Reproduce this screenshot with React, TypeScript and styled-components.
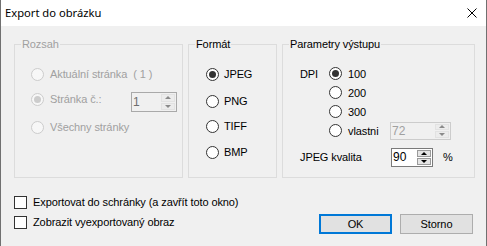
import React from 'react';
import styled, { createGlobalStyle } from 'styled-components';

const Global = createGlobalStyle`
  html, body { margin: 0; padding: 0; background: #f0f0f0; }
  body { width: 487px; height: 246px; overflow: hidden; }
`;

const Window = styled.div`
  box-sizing: border-box;
  width: 487px;
  height: 246px;
  display: flex;
  flex-direction: column;
  background: #f0f0f0;
  border-left: 1px solid #707070;
  border-right: 1px solid #707070;
  font-family: "Liberation Sans", Arial, sans-serif;
  font-size: 11px;
  letter-spacing: -0.1px;
  color: #000;
`;

const TitleBar = styled.div`
  flex: none;
  height: 26px;
  background: #fff;
  display: flex;
  align-items: center;
  justify-content: space-between;
  padding-left: 4px;
`;

const Title = styled.span`
  font-family: "Noto Sans", "Open Sans", sans-serif;
  font-size: 11.2px;
  letter-spacing: 0;
  line-height: 16px;
`;

const CloseButton = styled.div`
  width: 28px;
  height: 26px;
  display: flex;
  align-items: center;
  justify-content: center;
`;

const Body = styled.div`
  flex: 1;
  display: flex;
  flex-direction: column;
  padding: 18px 11px 0 13px;
`;

const Groups = styled.div`
  display: flex;
  gap: 5px;
`;

const Group = styled.div<{ $w: number; $pl: number; $pt: number }>`
  position: relative;
  box-sizing: border-box;
  width: ${p => p.$w}px;
  height: 134px;
  border: 1px solid #dcdcdc;
  padding: ${p => p.$pt}px 0 0 ${p => p.$pl}px;
  display: flex;
  flex-direction: column;
`;

const GroupTitle = styled.span<{ $disabled?: boolean }>`
  position: absolute;
  top: -7px;
  left: 6px;
  padding: 0 1px;
  line-height: 13px;
  background: #f0f0f0;
  color: ${p => (p.$disabled ? '#a0a0a0' : '#000')};
`;

const Row = styled.div<{ $h?: number; $mt?: number }>`
  display: flex;
  align-items: center;
  height: ${p => p.$h ?? 20}px;
  margin-top: ${p => p.$mt ?? 0}px;
`;

const RadioCircle = styled.span<{ $checked?: boolean; $disabled?: boolean }>`
  box-sizing: border-box;
  flex: none;
  width: 13px;
  height: 13px;
  border-radius: 50%;
  border: 1px solid ${p => (p.$disabled ? '#cccccc' : '#333333')};
  background: ${p => (p.$disabled ? '#f7f7f7' : '#ffffff')};
  display: flex;
  align-items: center;
  justify-content: center;
  &::after {
    content: '';
    width: 7px;
    height: 7px;
    border-radius: 50%;
    background: ${p => (p.$checked ? (p.$disabled ? '#cccccc' : '#333333') : 'transparent')};
  }
`;

const Label = styled.span<{ $disabled?: boolean; $w?: number; $ml?: number }>`
  margin-left: ${p => p.$ml ?? 6}px;
  white-space: pre;
  color: ${p => (p.$disabled ? '#a0a0a0' : '#000')};
  ${p => (p.$w ? `width: ${p.$w}px; flex: none;` : '')}
`;

const DpiBlock = styled.div`
  display: flex;
`;

const DpiLabel = styled.div`
  width: 29px;
  height: 19px;
  display: flex;
  align-items: center;
`;

const RadioColumn = styled.div`
  display: flex;
  flex-direction: column;
`;

const Spinner = styled.div<{ $w: number; $h: number; $border: string; $bg: string; $mt?: number }>`
  box-sizing: border-box;
  flex: none;
  width: ${p => p.$w}px;
  height: ${p => p.$h}px;
  border: 1px solid ${p => p.$border};
  background: ${p => p.$bg};
  display: flex;
  ${p => (p.$mt !== undefined ? `align-self: flex-start; margin-top: ${p.$mt}px;` : '')}
`;

const SpinValue = styled.span<{ $color: string }>`
  flex: 1;
  display: flex;
  align-items: center;
  padding-left: 1px;
  font-size: 12px;
  letter-spacing: 0;
  color: ${p => p.$color};
`;

const SpinButtons = styled.div`
  flex: none;
  width: 14px;
  display: flex;
  flex-direction: column;
  gap: 1px;
  padding: 1px;
`;

const SpinBtn = styled.div<{ $enabled?: boolean }>`
  box-sizing: border-box;
  flex: 1;
  background: ${p => (p.$enabled ? '#e5e5e5' : '#ececec')};
  border: 1px solid ${p => (p.$enabled ? '#9a9a9a' : '#e2e2e2')};
  display: flex;
  align-items: center;
  justify-content: center;
`;

const Arrow = styled.span<{ $down?: boolean; $color: string }>`
  width: 0;
  height: 0;
  border-left: 3px solid transparent;
  border-right: 3px solid transparent;
  ${p =>
    p.$down
      ? `border-top: 3px solid ${p.$color};`
      : `border-bottom: 3px solid ${p.$color};`}
`;

const Footer = styled.div`
  display: flex;
  justify-content: space-between;
  align-items: flex-start;
  margin-top: 14px;
`;

const Checks = styled.div`
  display: flex;
  flex-direction: column;
`;

const CheckBox = styled.span`
  box-sizing: border-box;
  flex: none;
  width: 13px;
  height: 13px;
  border: 1px solid #333333;
  background: #fff;
`;

const Buttons = styled.div`
  display: flex;
  gap: 8px;
  margin-top: 22px;
  margin-right: 2px;
`;

const Button = styled.div<{ $default?: boolean }>`
  box-sizing: border-box;
  width: 73px;
  height: 20px;
  display: flex;
  align-items: center;
  justify-content: center;
  background: #e1e1e1;
  border: ${p => (p.$default ? '2px solid #0078d7' : '1px solid #adadad')};
`;

type SpinProps = {
  value: string;
  w: number;
  h: number;
  enabled?: boolean;
  border: string;
  color: string;
  mt?: number;
};

const Spin: React.FC<SpinProps> = ({ value, w, h, enabled, border, color, mt }) => (
  <Spinner $w={w} $h={h} $border={border} $bg={enabled ? '#ffffff' : '#f0f0f0'} $mt={mt}>
    <SpinValue $color={color}>{value}</SpinValue>
    <SpinButtons>
      <SpinBtn $enabled={enabled}>
        <Arrow $color={enabled ? '#000' : '#8a8a8a'} />
      </SpinBtn>
      <SpinBtn $enabled={enabled}>
        <Arrow $down $color={enabled ? '#000' : '#8a8a8a'} />
      </SpinBtn>
    </SpinButtons>
  </Spinner>
);

export default function App() {
  return (
    <>
      <Global />
      <Window>
        <TitleBar>
          <Title>Export do obrázku</Title>
          <CloseButton>
            <svg width="10" height="10" viewBox="0 0 10 10">
              <path d="M0.5 0.5 L9.5 9.5 M9.5 0.5 L0.5 9.5" stroke="#000" strokeWidth="1" fill="none" />
            </svg>
          </CloseButton>
        </TitleBar>
        <Body>
          <Groups>
            <Group $w={169} $pl={16} $pt={19}>
              <GroupTitle $disabled>Rozsah</GroupTitle>
              <Row>
                <RadioCircle $disabled />
                <Label $disabled>{'Aktuální stránka  ( 1 )'}</Label>
              </Row>
              <Row $mt={5}>
                <RadioCircle $disabled $checked />
                <Label $disabled $w={81}>Stránka č.:</Label>
                <Spin value="1" w={46} h={20} border="#a9a9a9" color="#6d6d6d" mt={3} />
              </Row>
              <Row $mt={8}>
                <RadioCircle $disabled />
                <Label $disabled>Všechny stránky</Label>
              </Row>
            </Group>

            <Group $w={89} $pl={17} $pt={19}>
              <GroupTitle>Formát</GroupTitle>
              <Row>
                <RadioCircle $checked />
                <Label $ml={5}>JPEG</Label>
              </Row>
              <Row $mt={7}>
                <RadioCircle />
                <Label $ml={5}>PNG</Label>
              </Row>
              <Row $mt={5}>
                <RadioCircle />
                <Label $ml={5}>TIFF</Label>
              </Row>
              <Row $mt={6}>
                <RadioCircle />
                <Label $ml={5}>BMP</Label>
              </Row>
            </Group>

            <Group $w={193} $pl={17} $pt={19}>
              <GroupTitle>Parametry výstupu</GroupTitle>
              <DpiBlock>
                <DpiLabel>DPI</DpiLabel>
                <RadioColumn>
                  <Row $h={19}>
                    <RadioCircle $checked />
                    <Label>100</Label>
                  </Row>
                  <Row $h={19}>
                    <RadioCircle />
                    <Label>200</Label>
                  </Row>
                  <Row $h={19}>
                    <RadioCircle />
                    <Label>300</Label>
                  </Row>
                  <Row $h={19}>
                    <RadioCircle />
                    <Label $w={42}>vlastni</Label>
                    <Spin value="72" w={61} h={18} border="#cccccc" color="#a0a0a0" />
                  </Row>
                </RadioColumn>
              </DpiBlock>
              <Row $h={18} $mt={8}>
                <Label $ml={0} $w={91}>JPEG kvalita</Label>
                <Spin value="90" w={42} h={19} border="#7a7a7a" color="#000" enabled />
                <Label $ml={10}>%</Label>
              </Row>
            </Group>
          </Groups>

          <Footer>
            <Checks>
              <Row>
                <CheckBox />
                <Label>Exportovat do schránky (a zavřít toto okno)</Label>
              </Row>
              <Row>
                <CheckBox />
                <Label>Zobrazit vyexportovaný obraz</Label>
              </Row>
            </Checks>
            <Buttons>
              <Button $default>OK</Button>
              <Button>Storno</Button>
            </Buttons>
          </Footer>
        </Body>
      </Window>
    </>
  );
}
